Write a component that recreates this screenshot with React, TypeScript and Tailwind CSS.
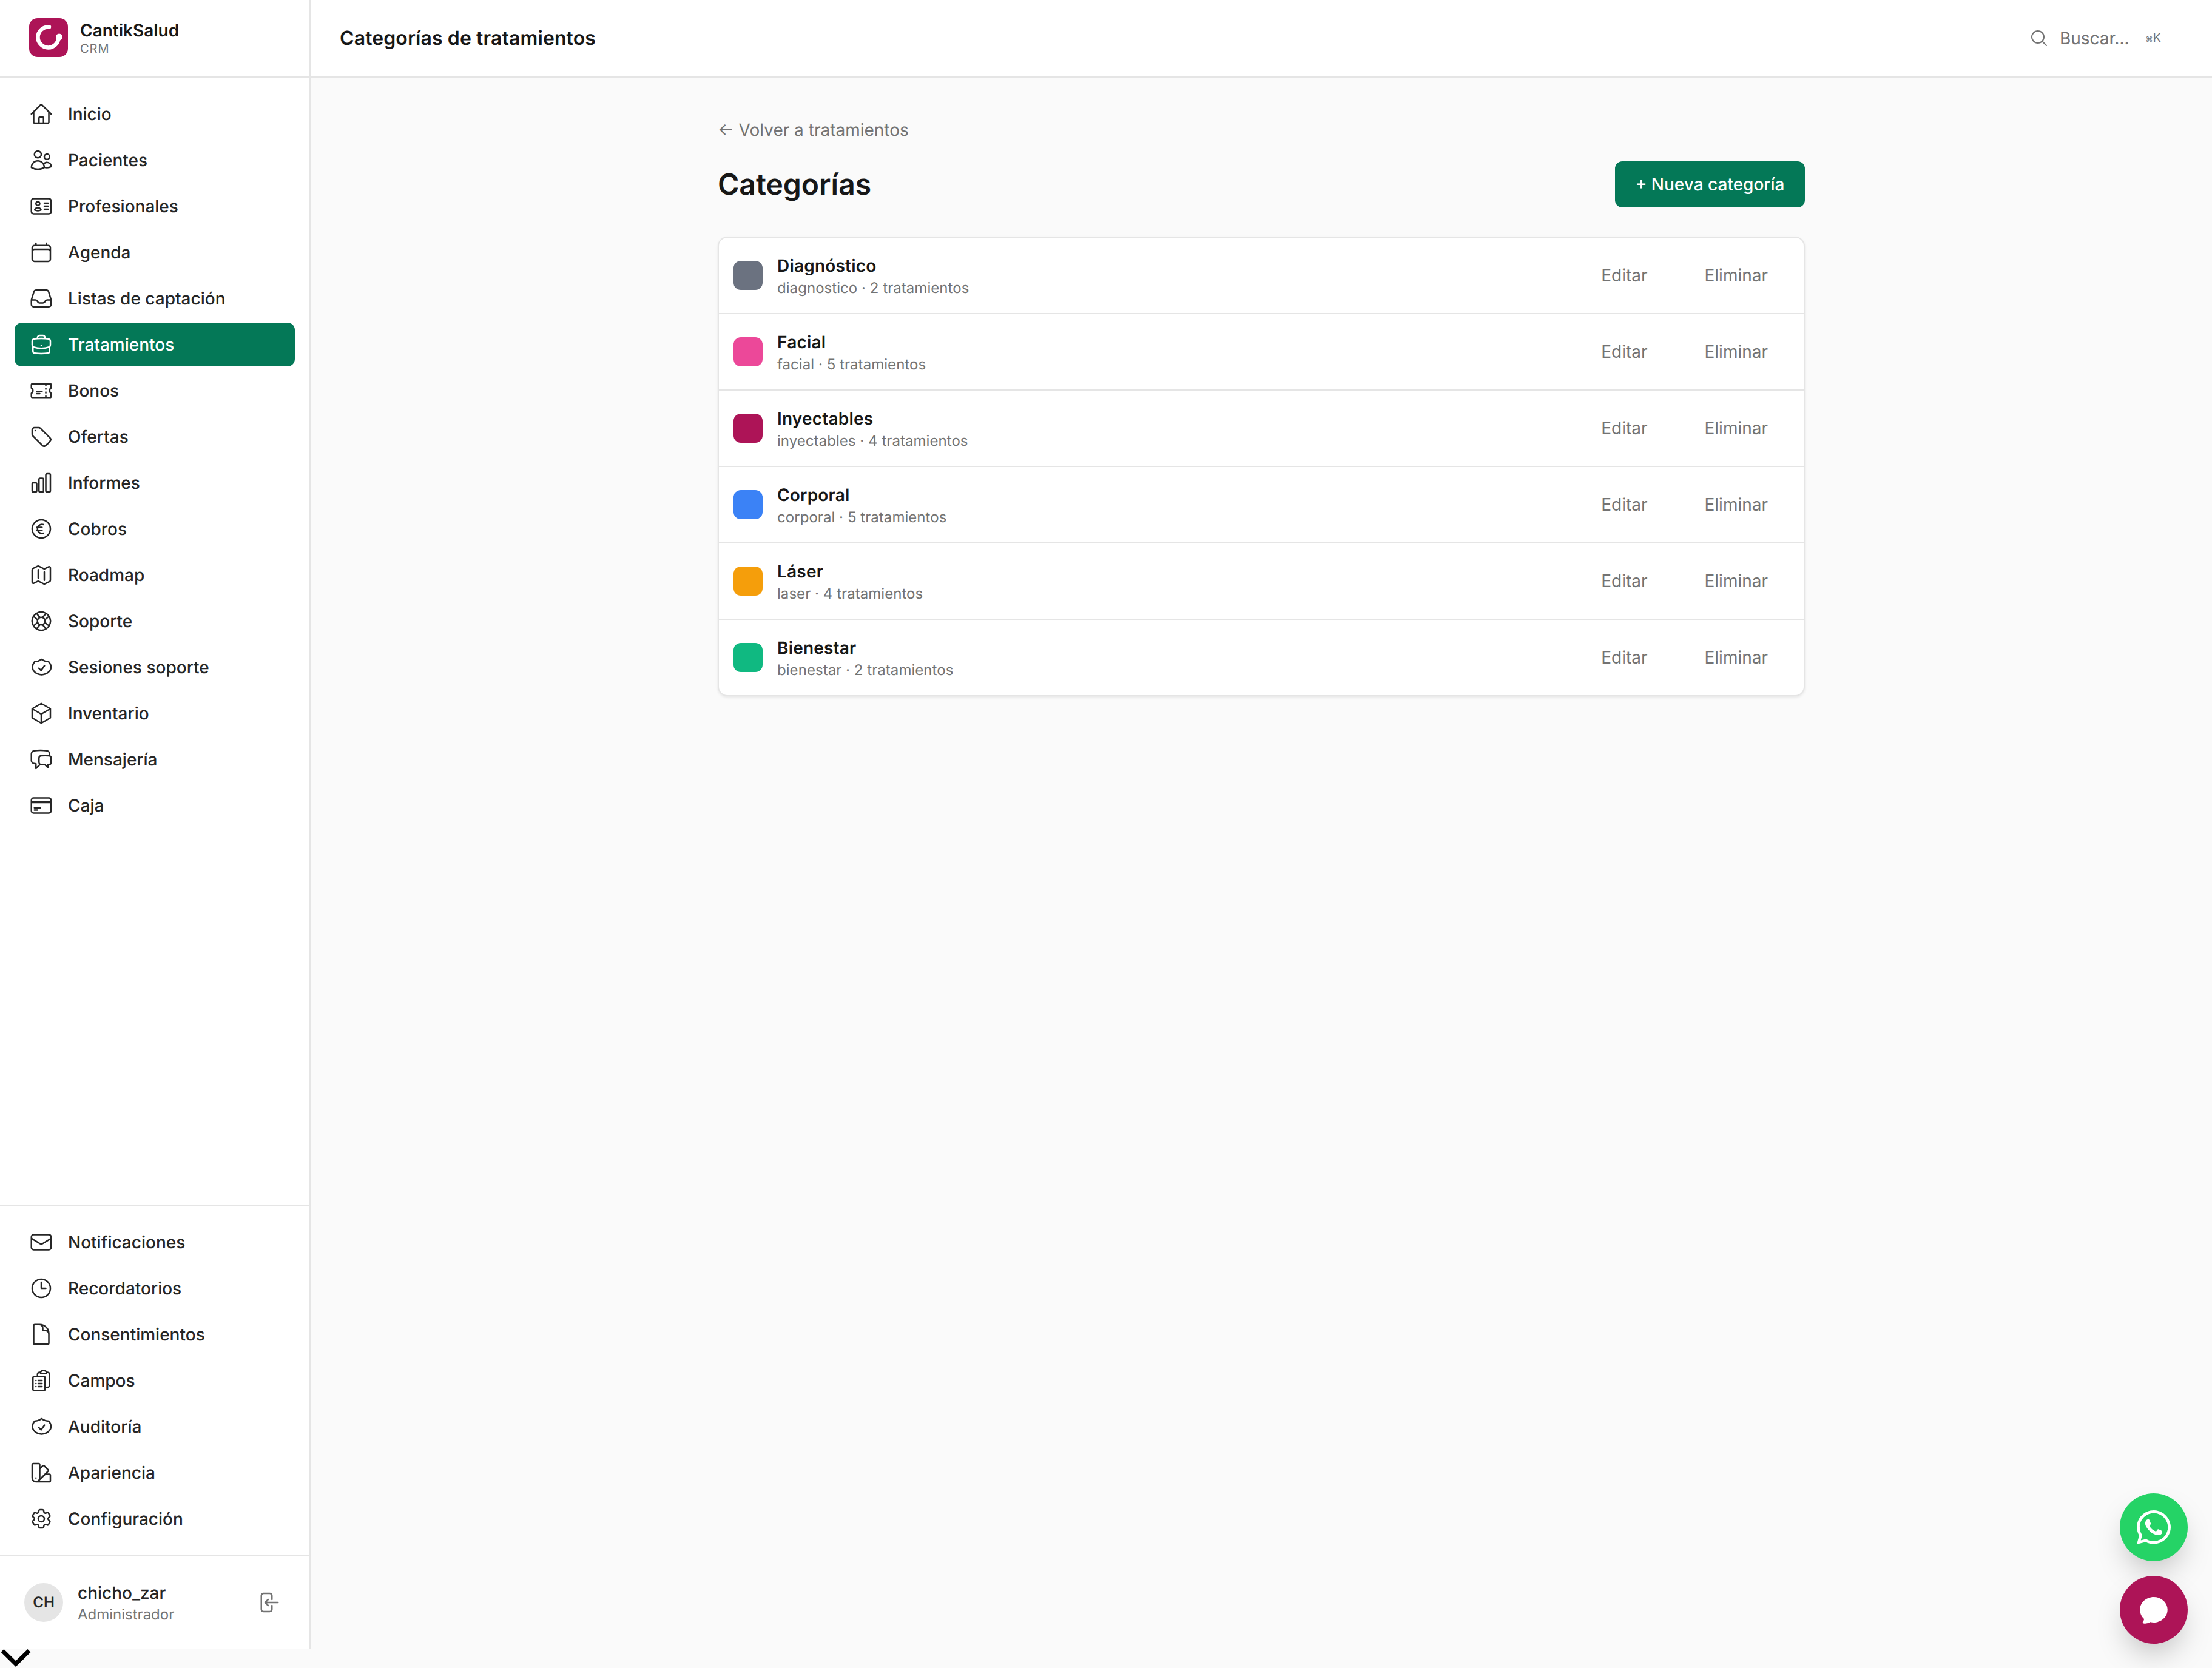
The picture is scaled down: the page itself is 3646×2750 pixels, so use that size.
import React from "react";
import {
  HiOutlineHome, HiOutlineUsers, HiOutlineIdentification, HiOutlineCalendar, HiOutlineInbox,
  HiOutlineBriefcase, HiOutlineTicket, HiOutlineTag, HiOutlineChartBar, HiOutlineCurrencyEuro,
  HiOutlineMap, HiOutlineLifebuoy, HiOutlineCube, HiOutlineChatBubbleLeftRight,
  HiOutlineCreditCard, HiOutlineEnvelope, HiOutlineClock, HiOutlineDocument, HiOutlineClipboardDocumentList,
  HiOutlineSwatch, HiOutlineCog6Tooth, HiOutlineArrowLeftEndOnRectangle, HiOutlineMagnifyingGlass,
  HiChatBubbleOvalLeft,
} from "react-icons/hi2";
import { FaWhatsapp } from "react-icons/fa";

function ShieldCheck({ className }: { className?: string }) {
  return (
    <svg viewBox="0 0 40 40" fill="none" stroke="currentColor" strokeWidth="2.5" strokeLinejoin="round" strokeLinecap="round" className={className}>
      <path d="M20.5 7C24 9.5 28 10.8 32 11C34.5 13.5 36 17 36 20C36 26.5 29 32 20.5 32.5C12 32 5.5 26.5 5.5 20C5.5 17 7 13.5 9 11C13 10.8 17 9.5 20.5 7Z" />
      <path d="M16 21.7L19.7 25.5L25.3 17.5" />
    </svg>
  );
}

const mainNav = [
  ["Inicio", HiOutlineHome],
  ["Pacientes", HiOutlineUsers],
  ["Profesionales", HiOutlineIdentification],
  ["Agenda", HiOutlineCalendar],
  ["Listas de captación", HiOutlineInbox],
  ["Tratamientos", HiOutlineBriefcase],
  ["Bonos", HiOutlineTicket],
  ["Ofertas", HiOutlineTag],
  ["Informes", HiOutlineChartBar],
  ["Cobros", HiOutlineCurrencyEuro],
  ["Roadmap", HiOutlineMap],
  ["Soporte", HiOutlineLifebuoy],
  ["Sesiones soporte", ShieldCheck],
  ["Inventario", HiOutlineCube],
  ["Mensajería", HiOutlineChatBubbleLeftRight],
  ["Caja", HiOutlineCreditCard],
] as const;

const bottomNav = [
  ["Notificaciones", HiOutlineEnvelope],
  ["Recordatorios", HiOutlineClock],
  ["Consentimientos", HiOutlineDocument],
  ["Campos", HiOutlineClipboardDocumentList],
  ["Auditoría", ShieldCheck],
  ["Apariencia", HiOutlineSwatch],
  ["Configuración", HiOutlineCog6Tooth],
] as const;

const categories = [
  { name: "Diagnóstico", sub: "diagnostico · 2 tratamientos", color: "bg-[#6b7280]" },
  { name: "Facial", sub: "facial · 5 tratamientos", color: "bg-[#ec4899]" },
  { name: "Inyectables", sub: "inyectables · 4 tratamientos", color: "bg-[#ad1457]" },
  { name: "Corporal", sub: "corporal · 5 tratamientos", color: "bg-[#3b82f6]" },
  { name: "Láser", sub: "laser · 4 tratamientos", color: "bg-[#f59e0b]" },
  { name: "Bienestar", sub: "bienestar · 2 tratamientos", color: "bg-[#10b981]" },
];

function NavItem({ label, Icon }: { label: string; Icon: React.ComponentType<{ className?: string }> }) {
  const active = label === "Tratamientos";
  return (
    <a
      className={
        "flex h-[72px] items-center gap-6 rounded-xl px-6 text-[28px] leading-10 font-medium " +
        (active ? "bg-[#047857] text-white" : "text-[#262626]")
      }
    >
      <Icon className="h-10 w-10 shrink-0" />
      <span>{label}</span>
    </a>
  );
}

function Logo() {
  return (
    <svg viewBox="0 0 64 64" className="h-16 w-16 shrink-0">
      <rect width="64" height="64" rx="14" fill="#ad1457" />
      <path d="M33 14.5A17 17 0 1 0 48.5 31" fill="none" stroke="#fff" strokeWidth="6.5" strokeLinecap="round" />
      <circle cx="49.5" cy="31" r="5.5" fill="#fff" />
    </svg>
  );
}

export default function App() {
  return (
    <div className="relative flex h-[2750px] w-full flex-col overflow-hidden bg-[#fafafa] font-[Inter,sans-serif] text-[#171717] [text-rendering:geometricPrecision]">
      <div className="flex h-[2718px] w-full shrink-0">
        <aside className="flex w-[512px] shrink-0 flex-col border-r-2 border-[#e5e5e5] bg-white">
          <div className="flex h-[128px] shrink-0 items-center gap-5 border-b-2 border-[#e5e5e5] pl-12 pb-[2px]">
            <Logo />
            <div className="flex flex-col">
              <span className="text-[28px] leading-[36px] font-semibold">CantikSalud</span>
              <span className="text-[20px] leading-[24px] tracking-[1px] text-[#737373]">CRM</span>
            </div>
          </div>
          <nav className="flex flex-1 flex-col gap-1 px-6 pt-6">
            {mainNav.map(([label, Icon]) => (
              <NavItem key={label} label={label} Icon={Icon} />
            ))}
          </nav>
          <div className="flex flex-col gap-1 border-t-2 border-[#e5e5e5] p-6">
            {bottomNav.map(([label, Icon]) => (
              <NavItem key={label} label={label} Icon={Icon} />
            ))}
          </div>
          <div className="flex h-[154px] shrink-0 items-center gap-6 border-t-2 border-[#e5e5e5] pl-10">
            <div className="flex h-16 w-16 shrink-0 items-center justify-center rounded-full bg-[#e5e5e5] text-[24px] font-semibold text-[#262626]">
              CH
            </div>
            <div className="flex w-[270px] flex-col">
              <span className="text-[28px] leading-10 font-medium text-[#262626]">chicho_zar</span>
              <span className="text-[24px] leading-8 text-[#737373]">Administrador</span>
            </div>
            <HiOutlineArrowLeftEndOnRectangle className="h-10 w-10 shrink-0 text-[#737373]" />
          </div>
        </aside>

        <div className="flex min-w-0 flex-1 flex-col">
          <header className="flex h-[128px] shrink-0 items-center justify-between border-b-2 border-[#e5e5e5] bg-white pr-[84px] pl-12">
            <h1 className="text-[32px] leading-10 font-semibold tracking-[0.1px]">Categorías de tratamientos</h1>
            <div className="flex items-center text-[#737373]">
              <HiOutlineMagnifyingGlass className="h-8 w-8" />
              <span className="ml-[18px] text-[28px] leading-10">Buscar...</span>
              <span className="ml-[27px] flex items-baseline text-[20px] leading-7">
                <span className="text-[12px]">⌘</span>
                <span>K</span>
              </span>
            </div>
          </header>

          <main className="mx-auto w-[1792px] pt-[66px]">
            <a className="block text-[28px] leading-10 text-[#737373]">← Volver a tratamientos</a>
            <div className="mt-8 flex items-center justify-between">
              <h2 className="text-[48px] leading-[64px] font-semibold">Categorías</h2>
              <button className="flex h-[76px] items-center rounded-xl bg-[#047857] px-[33.5px] text-[28px] font-medium text-white">
                + Nueva categoría
              </button>
            </div>
            <div className="mt-12 overflow-hidden rounded-2xl border-2 border-[#e5e5e5] bg-white shadow-[0_2px_4px_rgba(0,0,0,0.08)]">
              {categories.map((c, i) => (
                <div
                  key={c.name}
                  className={"flex items-center gap-6 py-[26px] pr-[27px] pl-6 " + (i > 0 ? "border-t-2 border-[#e5e5e5]" : "")}
                >
                  <div className={"h-12 w-12 shrink-0 rounded-xl " + c.color} />
                  <div className="flex flex-1 flex-col">
                    <span className="text-[28px] leading-10 font-semibold tracking-[0.2px]">{c.name}</span>
                    <span className="-mb-[2px] text-[24px] leading-[34px] tracking-[0.05px] text-[#737373]">{c.sub}</span>
                  </div>
                  <div className="flex items-center gap-[30px] text-[28px] leading-10 text-[#737373]">
                    <button className="px-8">Editar</button>
                    <button className="px-8">Eliminar</button>
                  </div>
                </div>
              ))}
            </div>
          </main>
        </div>
      </div>

      <div className="h-[32px] shrink-0">
        <svg viewBox="0 0 52 32" className="h-8 w-[52px]">
          <path d="M4 3.5L26 25L48 3.5" fill="none" stroke="#000" strokeWidth="7" />
        </svg>
      </div>

      <div className="absolute right-10 bottom-10 flex flex-col gap-6">
        <button className="flex h-[112px] w-[112px] items-center justify-center rounded-full bg-[#25d366] text-white shadow-2xl">
          <FaWhatsapp className="h-16 w-16" />
        </button>
        <button className="flex h-[112px] w-[112px] items-center justify-center rounded-full bg-[#ad1457] text-white shadow-2xl">
          <HiChatBubbleOvalLeft className="h-14 w-14" />
        </button>
      </div>
    </div>
  );
}
